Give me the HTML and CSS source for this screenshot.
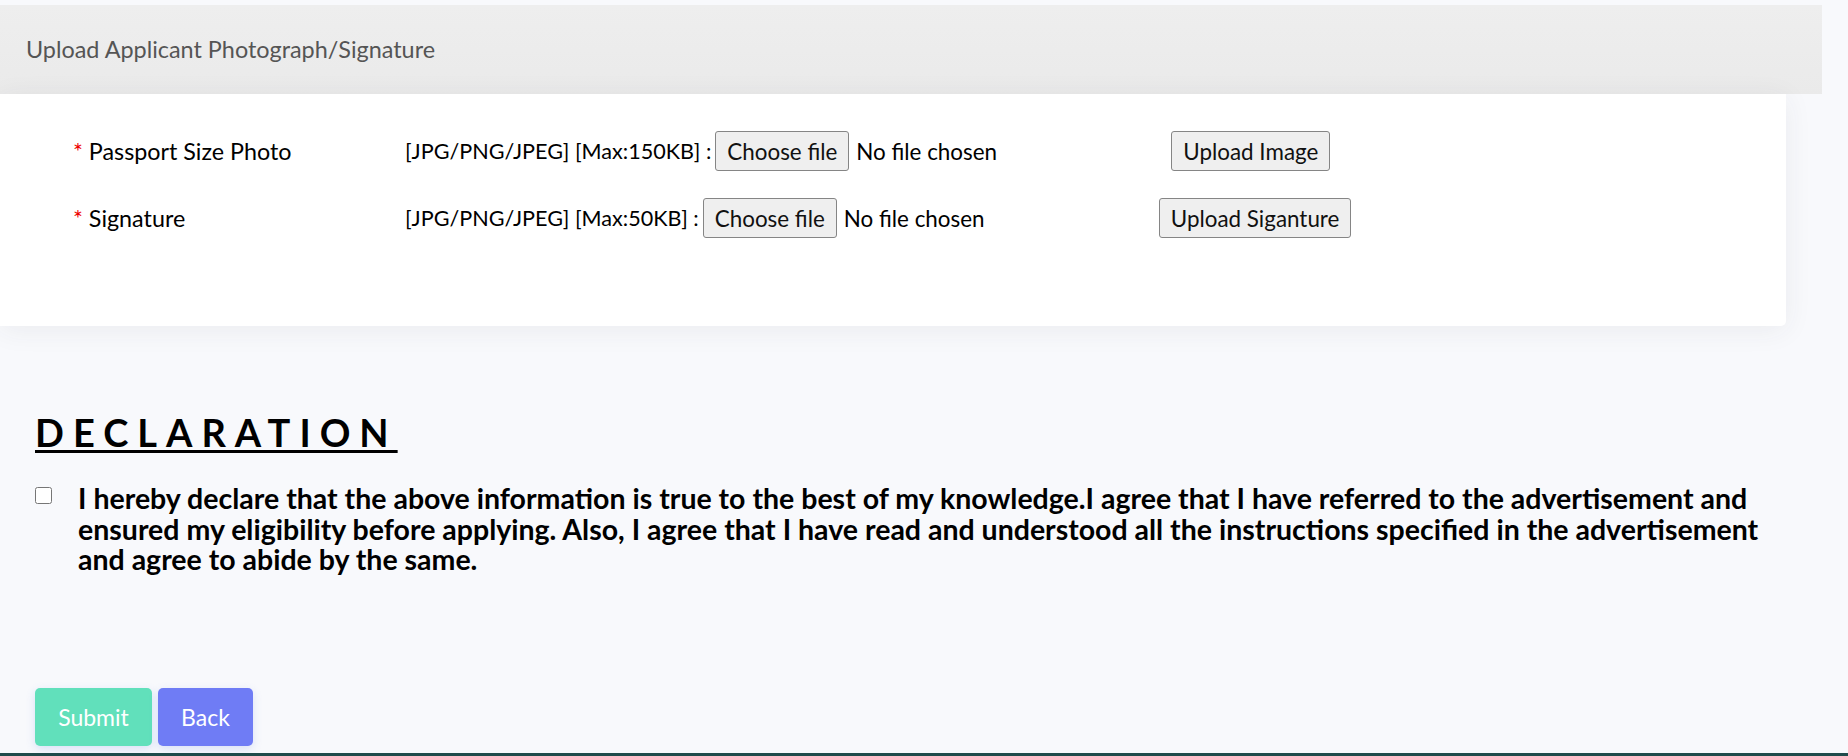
FILE: index.html
```html
<!DOCTYPE html>
<html lang="en">
<head>
<meta charset="utf-8">
<title>Upload Applicant Photograph/Signature</title>
<link rel="stylesheet" href="styles.css">
</head>
<body>
<div class="page">
  <div class="panel-head">Upload Applicant Photograph/Signature</div>
  <div class="card">
    <div class="upload-row">
      <div class="label"><span class="req">*</span> Passport Size Photo</div>
      <div class="field">
        <span class="spec">[JPG/PNG/JPEG] [Max:150KB] :</span>
        <span class="file"><button class="file-btn" type="button">Choose file</button><span class="file-name">No file chosen</span></span>
        <button class="plain-btn" type="button">Upload Image</button>
      </div>
    </div>
    <div class="upload-row">
      <div class="label"><span class="req">*</span> Signature</div>
      <div class="field">
        <span class="spec">[JPG/PNG/JPEG] [Max:50KB] :</span>
        <span class="file"><button class="file-btn" type="button">Choose file</button><span class="file-name">No file chosen</span></span>
        <button class="plain-btn" type="button">Upload Siganture</button>
      </div>
    </div>
  </div>

  <section class="declaration">
    <h2 class="decl-title">DECLARATION</h2>
    <label class="decl-check">
      <input type="checkbox" class="check">
      <span class="decl-text">I hereby declare that the above information is true to the best of my knowledge.I agree that I have referred to the advertisement and ensured my eligibility before applying. Also, I agree that I have read and understood all the instructions specified in the advertisement and agree to abide by the same.</span>
    </label>
    <div class="actions">
      <button class="btn btn-submit" type="button">Submit</button>
      <button class="btn btn-back" type="button">Back</button>
    </div>
  </section>
</div>
<div class="footer-line"></div>
</body>
</html>
```

FILE: styles.css
```css
html, body {
  margin: 0;
  padding: 0;
}
body {
  background: #f8f9fc;
  font-family: Lato, "Noto Sans", sans-serif;
  color: #000;
  height: 756px;
  overflow: hidden;
  display: flex;
  flex-direction: column;
}
.page {
  flex: 1;
  padding-top: 5px;
}
.panel-head {
  width: 1822px;
  height: 89px;
  box-sizing: border-box;
  padding-left: 26px;
  padding-bottom: 2px;
  display: flex;
  align-items: center;
  background: linear-gradient(#eeeeee, #eaeaea);
  color: #555;
  font-size: 23.4px;
}
.card {
  width: 1786px;
  height: 232px;
  box-sizing: border-box;
  background: #fff;
  border-radius: 0 0 5px 0;
  box-shadow: 0 4px 28px rgba(58, 59, 69, 0.07);
  padding: 37px 0 0 73px;
  display: flex;
  flex-direction: column;
  gap: 27px;
}
.upload-row {
  display: grid;
  grid-template-columns: 332px auto;
  align-items: center;
  height: 40px;
}
.label {
  font-size: 23.3px;
}
.req {
  color: #e00;
}
.field {
  display: flex;
  align-items: center;
}
.spec {
  font-size: 21.6px;
  margin-right: 4px;
}
.file {
  display: flex;
  align-items: center;
  width: 456px;
}
.file-name {
  font-size: 22.4px;
  margin-left: 7px;
}
.file-btn, .plain-btn {
  height: 40px;
  box-sizing: border-box;
  font-family: inherit;
  font-size: 22.4px;
  color: #111;
  background: #efefef;
  border: 1px solid #858585;
  border-radius: 3px;
  padding: 0 11px;
}
.declaration {
  padding: 0 0 0 35px;
}
.decl-title {
  margin: 84px 0 0;
  font-size: 38px;
  font-weight: 700;
  letter-spacing: 9px;
  text-decoration: underline;
  text-decoration-thickness: 3px;
  text-underline-offset: 3px;
  line-height: 44px;
}
.decl-check {
  display: flex;
  align-items: flex-start;
  margin-top: 29px;
}
.check {
  width: 17px;
  height: 17px;
  margin: 4px 26px 0 0;
  flex: none;
}
.decl-text {
  font-size: 28.5px;
  font-weight: 700;
  line-height: 30.5px;
  width: 1712px;
}
.actions {
  display: flex;
  gap: 6px;
  margin-top: 113px;
}
.btn {
  height: 58px;
  border: none;
  border-radius: 5px;
  color: #fff;
  font-family: inherit;
  font-size: 23px;
  padding: 0;
  box-shadow: 0 3px 10px rgba(78, 115, 223, 0.18);
}
.btn-submit {
  width: 117px;
  background: #61e0bb;
}
.btn-back {
  width: 95px;
  background: #6f7cf5;
}
.footer-line {
  height: 3px;
  background: #1f4b4b;
}
```
